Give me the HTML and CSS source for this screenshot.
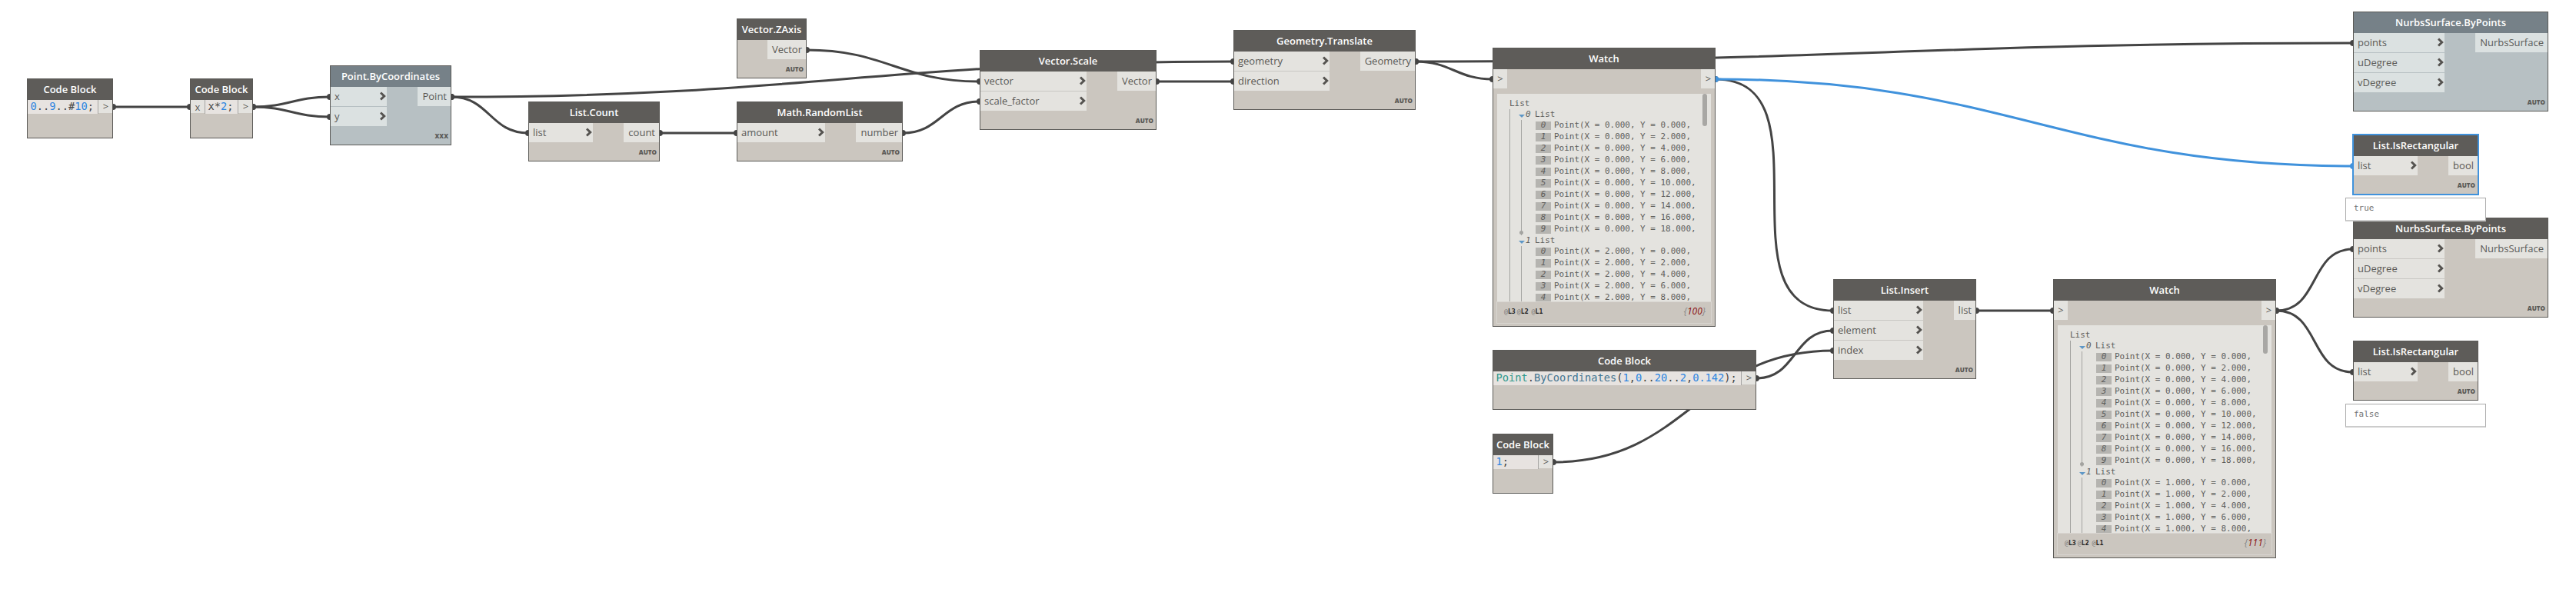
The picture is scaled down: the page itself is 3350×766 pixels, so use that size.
FILE: index.html
```
<!DOCTYPE html>
<html lang="en"><head><meta charset="utf-8"><title>Graph workspace</title><link rel="stylesheet" href="styles.css"></head>
<body><main class="canvas" id="canvas"></main><script src="graph.js"></script></body></html>
```
FILE: styles.css
```
* { box-sizing: border-box; }
body { margin: 0; background: #fff; }
.canvas { position: relative; width: 3350px; height: 766px; overflow: hidden; background: #fff; font-family: "Open Sans", sans-serif; color: #5a5956; }
.wires { position: absolute; left: 0; top: 0; }
.wire { fill: none; stroke: #444; stroke-width: 3; }
.dot { fill: #444; }
.wire.active { stroke: #4092dc; }
.dot.active { fill: #4092dc; }
.node { position: absolute; display: flex; flex-direction: column; background: #cbc6bf; border: 1px solid #5b5a57; overflow: hidden; }
.title { flex: 0 0 26px; background: #5e5c59; color: #fff; font-size: 13px; font-weight: 600; line-height: 27px; text-align: center; white-space: nowrap; }
.title span, .label { display: inline-block; }
.ports { display: flex; justify-content: space-between; align-items: flex-start; }
.inputs { display: flex; flex-direction: column; gap: 1px; background: #c9c7c3; }
.port { display: flex; align-items: center; height: 25px; padding-bottom: 2px; background: #e4e3df; font-size: 13px; white-space: nowrap; }
.inputs .port { justify-content: space-between; padding-left: 5px; }
.out { padding-right: 5px; justify-content: flex-end; margin-left: auto; }
.arrow { width: 8px; height: 12px; margin: 0 1px 0 0; fill: none; stroke: #555350; stroke-width: 3; }
.lacing { margin-top: auto; height: 24px; padding-right: 3px; font-size: 8.1px; font-weight: 800; line-height: 25px; text-align: right; }
.frozen { background: #b7c0c3; }
.frozen .title { background: #768188; }
.frozen .port { background: #dbe1e1; }
.frozen .inputs { background: #b7c0c3; }
.selected { outline: 1px solid #4092dc; border-color: #4092dc; }
.code-row { display: flex; align-items: flex-start; }
.chip { height: 17px; width: 18px; background: #e4e3df; font-size: 13px; line-height: 19px; text-align: center; }
.chip.sym { line-height: 16px; padding-left: 1px; }
.code { flex: 1; height: 18px; background: #e7e3e0; color: #444; font: 13.7px/16px "DejaVu Sans Mono", monospace; padding-left: 3.6px; white-space: pre; border-right: 1px solid #a5a4a2; overflow: hidden; }
.code.split { border-left: 1px solid #a5a4a2; }
.num { color: #2e86e0; } .type { color: #32998c; } .fn { color: #437592; }
.watch-ports { display: flex; justify-content: space-between; flex: 0 0 25px; }
.watch-ports .chip { height: 25px; line-height: 25px; }
.watch-ports .chip:last-child { padding-left: 1px; }
.list { position: relative; height: 270px; margin: 7px 5px 0; background: #e4e3df; overflow: hidden; padding-top: 6px; font: 10.96px/15px "DejaVu Sans Mono", monospace; color: #5e5e5c; white-space: pre; }
.root { height: 14px; padding-left: 16px; line-height: 14px; }
.tree { border-left: 1px solid #a3a3a0; margin-left: 16px; height: 260px; }
.branch { display: flex; height: 14px; align-items: center; padding: 0 0 2px 11px; }
.caret { width: 0; height: 0; border: 4px solid transparent; border-top: 4px solid #5e97c6; border-bottom: 0; margin-top: 6px; }
.key { width: 13px; padding-left: 1px; font-style: italic; }
.items { position: relative; border-left: 1px solid #a3a3a0; margin-left: 14px; padding-left: 18px; height: 150px; }
.items.done::after { content: ""; position: absolute; left: -3px; bottom: 1px; width: 5px; height: 5px; border-radius: 50%; background: #a3a3a0; }
.item { display: flex; align-items: center; height: 15px; }
.value { padding-bottom: 2px; }
.index { width: 20px; height: 11px; margin-right: 4px; background: #b5b4b0; font-style: italic; line-height: 10px; text-align: center; }
.scroll { position: absolute; right: 5px; top: 0; width: 6px; height: 42px; border-radius: 3px; background: #a8a7a4; }
.foot { display: flex; align-items: center; height: 29px; margin: 0 4px; border: 1px solid #d8d5d0; padding: 0 7px 3px 9px; font-family: "DejaVu Sans Mono", monospace; font-size: 8.2px; font-weight: 700; color: #222; }
.foot i { font-weight: 400; font-style: normal; color: #777; }
.level { margin-right: 2px; }
.level + .level { margin-right: 4px; }
.count { margin-left: auto; padding-bottom: 1px; font-family: "Open Sans", sans-serif; font-size: 12px; font-style: italic; font-weight: 500; color: #8c1010; }
.count b { font-weight: 400; color: #888; }
.bubble { position: absolute; width: 183px; height: 31px; border: 1px solid #aaa; border-bottom: 2px solid #ccc; background: #fff; padding-left: 10px; color: #737373; font: 10.96px/26px "DejaVu Sans Mono", monospace; }
```
FILE: graph.js
```
const canvas = document.getElementById('canvas');
const box = (x, y, w, h) => `style="left:${x}px;top:${y}px;width:${w}px;height:${h}px"`;
const arrow = '<svg class="arrow" viewBox="0 0 8 12"><path d="M1 1.5 5.7 6 1 10.5"/></svg>';

// Wires: start x, start y, end x, end y, active
const wires = [
  [147,139,247,139],[329,139,429,126],[329,139,429,152],[587,126,687,173],[587,126,1604,80],
  [858,173,958,173],[1049,65,1274,106],[1174,173,1274,132],[1504,106,1604,106],
  [1841,80,1941,103],[1841,80,3060,56],[2231,103,2384,404],[2231,103,3060,216,1],
  [2284,492,2384,430],[2020,601,2384,456],[2570,404,2670,404],[2960,404,3060,324],[2960,404,3060,484]
];
let html = '<svg class="wires" width="3350" height="766">';
for (const [x1, y1, x2, y2, on] of wires) {
  const k = 0.45 * Math.hypot(x2 - x1, y2 - y1), c = on ? ' active' : '';
  html += `<path class="wire${c}" d="M${x1} ${y1}C${x1 + k} ${y1} ${x2 - k} ${y2} ${x2} ${y2}"/>` +
    `<circle class="dot${c}" cx="${x1}" cy="${y1}" r="4"/><circle class="dot${c}" cx="${x2}" cy="${y2}" r="4"/>`;
}
html += '</svg>';

function node(x, y, w, name, ins, inW, out, outW, cls = '', lacing = 'AUTO') {
  const h = 52 + 26 * Math.max(1, ins.length);
  html += `<section class="node ${cls}" ${box(x, y, w, h)}><div class="title"><span>${name}</span></div><div class="ports">` +
    (ins.length ? `<div class="inputs" style="width:${inW}px">${ins.map(p => `<div class="port"><span class="label">${p}</span>${arrow}</div>`).join('')}</div>` : '') +
    `<div class="port out" style="width:${outW}px"><span class="label">${out}</span></div></div><div class="lacing">${lacing}</div></section>`;
}
function code(x, y, w, text, input) {
  html += `<section class="node" ${box(x, y, w, 78)}><div class="title"><span>Code Block</span></div><div class="code-row">` +
    (input ? `<div class="chip">${input}</div>` : '') +
    `<div class="code${input ? ' split' : ''}">${text}</div><div class="chip sym">&gt;</div></div></section>`;
}
function watch(x, y, second, count, bar) {
  const rows = (v, n) => Array.from({ length: n }, (_, i) =>
    `<div class="item"><span class="index">${i}</span><span class="value">Point(X = ${v}.000, Y = ${i * 2}.000,</span></div>`).join('');
  const branch = k => `<div class="branch"><span class="caret"></span><span class="key">${k}</span><span>List</span></div>`;
  html += `<section class="node" ${box(x, y, 290, 363)}><div class="title"><span>Watch</span></div>` +
    `<div class="watch-ports"><div class="chip">&gt;</div><div class="chip">&gt;</div></div>` +
    `<div class="list"><div class="root">List</div><div class="tree">${branch(0)}<div class="items done">${rows(0, 10)}</div>${branch(1)}<div class="items">${rows(second, 5)}</div></div>` +
    `<div class="scroll" style="height:${bar}px"></div></div>` +
    `<div class="foot"><span class="level"><i>@</i>L3</span><span class="level"><i>@</i>L2</span><span class="level"><i>@</i>L1</span><span class="count"><b>{</b>${count}<b>}</b></span></div></section>`;
}

const n = t => `<span class="num">${t}</span>`;
code(35, 102, 112, `${n(0)}..${n(9)}..#${n(10)};`);
code(247, 102, 82, `x*${n(2)};`, 'x');
node(429, 85, 158, 'Point.ByCoordinates', ['x', 'y'], 73, 'Point', 43, 'frozen', 'XXX');
node(687, 132, 171, 'List.Count', ['list'], 83, 'count', 46);
node(958, 24, 91, 'Vector.ZAxis', [], 0, 'Vector', 50);
node(958, 132, 216, 'Math.RandomList', ['amount'], 114, 'number', 60);
node(1274, 65, 230, 'Vector.Scale', ['vector', 'scale_factor'], 138, 'Vector', 50);
node(1604, 39, 237, 'Geometry.Translate', ['geometry', 'direction'], 124, 'Geometry', 71);
watch(1941, 62, 2, 100, 42);
code(1941, 455, 343, `<span class="type">Point</span>.<span class="fn">ByCoordinates</span>(${n(1)},${n(0)}..${n(20)}..${n(2)},${n('0.142')});`);
code(1941, 564, 79, `${n(1)};`);
node(2384, 363, 186, 'List.Insert', ['list', 'element', 'index'], 116, 'list', 28);
watch(2670, 363, 1, 111, 37);
node(3060, 15, 254, 'NurbsSurface.ByPoints', ['points', 'uDegree', 'vDegree'], 118, 'NurbsSurface', 94, 'frozen');
node(3060, 175, 163, 'List.IsRectangular', ['list'], 83, 'bool', 38, 'selected');
node(3060, 283, 254, 'NurbsSurface.ByPoints', ['points', 'uDegree', 'vDegree'], 118, 'NurbsSurface', 94);
node(3060, 443, 163, 'List.IsRectangular', ['list'], 83, 'bool', 38);
html += '<div class="bubble" style="left:3050px;top:257px">true</div><div class="bubble" style="left:3050px;top:525px">false</div>';
canvas.innerHTML = html;
```
